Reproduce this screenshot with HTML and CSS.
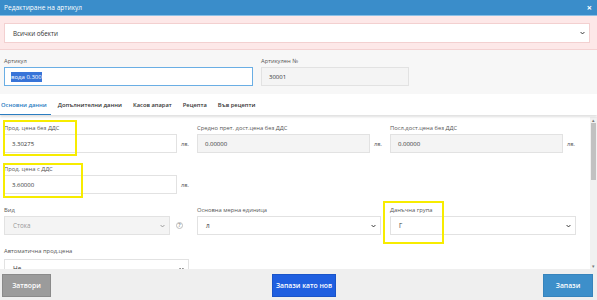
FILE: index.html
```html
<!DOCTYPE html>
<html>
<head>
  <title>Редактиране на артикул</title>
  <link rel="stylesheet" href="styles.css">
</head>
<body>
  <div class="modal">
    <div class="modal-header">
      <span class="modal-title">Редактиране на артикул</span>
      <span class="close">&times;</span>
    </div>

    <div class="objects">
      <div class="select wide">
        <span>Всички обекти</span>
        <svg class="chev" viewBox="0 0 8 5"><polyline points="1,1 4,4 7,1"/></svg>
      </div>
    </div>

    <div class="article">
      <div class="field">
        <div class="label">Артикул</div>
        <div class="input focused art-name"><span class="sel">вода 0.300</span></div>
      </div>
      <div class="field">
        <div class="label">Артикулен №</div>
        <div class="input disabled art-no">30001</div>
      </div>
    </div>

    <div class="tabs">
      <span class="tab active">Основни данни</span>
      <span class="tab">Допълнителни данни</span>
      <span class="tab">Касов апарат</span>
      <span class="tab">Рецепта</span>
      <span class="tab">Във рецепти</span>
    </div>

    <div class="content">
      <div class="form">
        <div class="row">
          <div class="field">
            <div class="mark mark-1"></div>
            <div class="label">Прод. цена без ДДС</div>
            <div class="line"><div class="input price">3.30275</div><span class="unit">лв.</span></div>
          </div>
          <div class="field">
            <div class="label">Средно прет. дост.цена без ДДС</div>
            <div class="line"><div class="input disabled price">0.00000</div><span class="unit">лв.</span></div>
          </div>
          <div class="field">
            <div class="label">Посл.дост.цена без ДДС</div>
            <div class="line"><div class="input disabled price">0.00000</div><span class="unit">лв.</span></div>
          </div>
        </div>

        <div class="row">
          <div class="field">
            <div class="mark mark-2"></div>
            <div class="label">Прод. цена с ДДС</div>
            <div class="line"><div class="input price">3.60000</div><span class="unit">лв.</span></div>
          </div>
        </div>

        <div class="row">
          <div class="field">
            <div class="label">Вид</div>
            <div class="line">
              <div class="select disabled kind">
                <span>Стока</span>
                <svg class="chev" viewBox="0 0 8 5"><polyline points="1,1 4,4 7,1"/></svg>
              </div>
              <span class="help">?</span>
            </div>
          </div>
          <div class="field">
            <div class="label">Основна мерна единица</div>
            <div class="select unit-sel">
              <span>л</span>
              <svg class="chev" viewBox="0 0 8 5"><polyline points="1,1 4,4 7,1"/></svg>
            </div>
          </div>
          <div class="field">
            <div class="mark mark-3"></div>
            <div class="label">Данъчна група</div>
            <div class="select tax">
              <span>Г</span>
              <svg class="chev" viewBox="0 0 8 5"><polyline points="1,1 4,4 7,1"/></svg>
            </div>
          </div>
        </div>

        <div class="row">
          <div class="field">
            <div class="label">Автоматична прод.цена</div>
            <div class="select auto">
              <span>Не</span>
              <svg class="chev" viewBox="0 0 8 5"><polyline points="1,1 4,4 7,1"/></svg>
            </div>
          </div>
        </div>
      </div>
      <div class="scrollbar">
        <span class="arrow">&#9652;</span>
        <div class="thumb"></div>
        <span class="arrow down">&#9662;</span>
      </div>
    </div>

    <div class="footer">
      <button class="btn btn-close">Затвори</button>
      <button class="btn btn-new">Запази като нов</button>
      <button class="btn btn-save">Запази</button>
    </div>
  </div>
</body>
</html>
```

FILE: styles.css
```css
body {
  margin: 0;
  font-family: 'Open Sans', 'Noto Sans', sans-serif;
  color: #333333;
  background-color: #ffffff;
}
.modal {
  width: 597px;
  height: 300px;
  display: flex;
  flex-direction: column;
  overflow: hidden;
}
.modal-header {
  height: 15px;
  background-color: #3a8dca;
  border-bottom: 1px solid #8cc0e6;
  display: flex;
  align-items: center;
  justify-content: space-between;
  padding: 0 5px 0 4px;
  color: #ffffff;
}
.modal-title {
  font-size: 6.6px;
}
.close {
  font-size: 9px;
  font-weight: bold;
  line-height: 1;
}
.objects {
  background-color: #fde8e8;
  border-bottom: 1px solid #f4d2d2;
  padding: 7px 7px 6px 4px;
}
.select {
  height: 19px;
  box-sizing: border-box;
  border: 1px solid #e2e2e2;
  background-color: #ffffff;
  display: flex;
  align-items: center;
  justify-content: space-between;
  padding: 0 4px 0 8px;
  font-size: 6.3px;
  color: #333333;
}
.objects .select {
  height: 20px;
  border-color: #f3d0d0;
}
.chev {
  width: 5px;
  height: 4px;
  fill: none;
  stroke: #333333;
  stroke-width: 1.6;
}
.article {
  background-color: #f7f7f7;
  height: 44px;
  display: flex;
  gap: 8px;
  padding: 5px 0 0 4px;
  box-sizing: border-box;
}
.label {
  font-size: 5.8px;
  color: #555555;
  height: 11px;
  line-height: 11px;
}
.article .label {
  height: 12px;
  line-height: 12px;
}
.input {
  height: 19px;
  box-sizing: border-box;
  border: 1px solid #e2e2e2;
  background-color: #ffffff;
  display: flex;
  align-items: center;
  padding-left: 7px;
  font-size: 6px;
  color: #333333;
}
.input.disabled, .select.disabled {
  background-color: #f4f4f4;
}
.select.disabled {
  color: #999999;
}
.select.disabled .chev {
  stroke: #999999;
}
.input.focused {
  border-color: #6aaee4;
}
.art-name {
  width: 249px;
  padding-left: 6px;
}
.art-no {
  width: 148px;
}
.sel {
  background-color: #3874d8;
  color: #ffffff;
  padding: 1px 0;
}
.tabs {
  height: 20px;
  background-color: #ffffff;
  display: flex;
  align-items: stretch;
  gap: 11px;
  padding-left: 1px;
  box-shadow: 0 2px 2px rgba(0, 0, 0, 0.12);
  position: relative;
  z-index: 1;
  margin-top: 1px;
}
.tab {
  font-size: 5.8px;
  font-weight: 600;
  color: #333333;
  display: flex;
  align-items: center;
  border-bottom: 1px solid transparent;
}
.tab.active {
  color: #2a7dc1;
  border-bottom-color: #2a7dc1;
  margin-left: -1px;
  padding: 0 4px 0 1px;
  margin-right: -4px;
}
.content {
  flex: 1;
  display: flex;
  background-color: #ffffff;
  overflow: hidden;
  margin-top: 2px;
}
.form {
  flex: 1;
  padding: 6px 0 0 4px;
  display: flex;
  flex-direction: column;
  gap: 11px;
}
.row {
  display: grid;
  grid-template-columns: 193px 193px 193px;
}
.field {
  position: relative;
}
.line {
  display: flex;
  align-items: center;
}
.price {
  width: 173px;
}
.unit {
  font-size: 5.6px;
  color: #555555;
  margin-left: 4px;
}
.kind {
  width: 166px;
}
.help {
  width: 7px;
  height: 7px;
  box-sizing: border-box;
  border: 1px solid #bdbdbd;
  border-radius: 50%;
  font-size: 5px;
  font-weight: bold;
  line-height: 5px;
  color: #9a9a9a;
  display: flex;
  align-items: center;
  justify-content: center;
  margin-left: 6px;
}
.unit-sel {
  width: 184px;
}
.tax {
  width: 186px;
}
.auto {
  width: 185px;
  margin-top: 2px;
}
.mark {
  position: absolute;
  border: 2px solid #f7ec00;
  box-sizing: border-box;
}
.mark-1 {
  left: -1px;
  top: -3px;
  width: 74px;
  height: 36px;
}
.mark-2 {
  left: -1px;
  top: -1px;
  width: 80px;
  height: 35px;
}
.mark-3 {
  left: -7px;
  top: -4px;
  width: 61px;
  height: 43px;
}
.scrollbar {
  width: 7px;
  background-color: #f1f1f1;
  display: flex;
  flex-direction: column;
  align-items: center;
  font-size: 5px;
  color: #777777;
}
.arrow {
  height: 6px;
  line-height: 6px;
}
.thumb {
  width: 5px;
  height: 57px;
  background-color: #c1c1c1;
}
.arrow.down {
  margin-top: auto;
}
.footer {
  height: 31px;
  flex-shrink: 0;
  background-color: #efefef;
  display: flex;
  align-items: flex-start;
  justify-content: space-between;
  padding: 5px 4px 0 2px;
  box-sizing: border-box;
}
.btn {
  height: 23px;
  border: 1px solid transparent;
  color: #ffffff;
  font-family: 'Open Sans', 'Noto Sans', sans-serif;
  font-size: 6.8px;
  font-weight: 600;
  padding: 0;
}
.btn-close {
  width: 49px;
  background-color: #9b9b9b;
  border-color: #8a8a8a;
}
.btn-new {
  width: 64px;
  background-color: #1f5fe0;
  border-color: #1a54c8;
  margin-left: 14px;
}
.btn-save {
  width: 50px;
  background-color: #3d8fca;
  border-color: #3784bc;
}
```
